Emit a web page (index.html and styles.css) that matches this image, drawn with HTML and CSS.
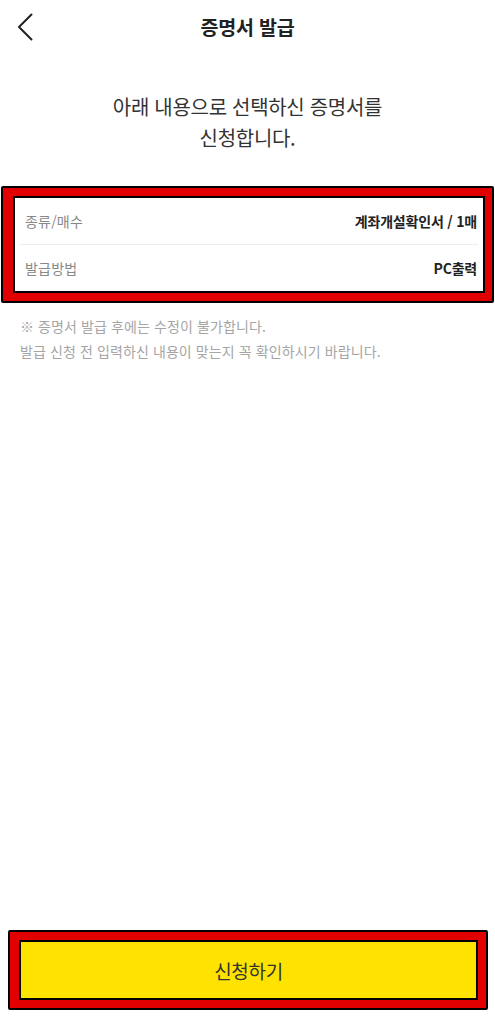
FILE: index.html
```html
<!DOCTYPE html>
<html lang="ko">
<head>
<meta charset="utf-8">
<title>증명서 발급</title>
<link rel="stylesheet" href="styles.css">
</head>
<body>
<div class="page">
  <header class="header">
    <button class="back" aria-label="뒤로">
      <svg width="16" height="28" viewBox="0 0 16 28"><path d="M14.5 1.5 L2 14 L14.5 26.5" fill="none" stroke="#222" stroke-width="2" stroke-linecap="round" stroke-linejoin="round"/></svg>
    </button>
    <h1 class="title">증명서 발급</h1>
  </header>

  <p class="lead">아래 내용으로 선택하신 증명서를<br>신청합니다.</p>

  <div class="mark mark-info">
    <div class="mark-inner info">
      <div class="row">
        <span class="label">종류/매수</span>
        <span class="value">계좌개설확인서 / 1매</span>
      </div>
      <div class="row">
        <span class="label">발급방법</span>
        <span class="value">PC출력</span>
      </div>
    </div>
  </div>

  <div class="notes">
    <p>※ 증명서 발급 후에는 수정이 불가합니다.</p>
    <p>발급 신청 전 입력하신 내용이 맞는지 꼭 확인하시기 바랍니다.</p>
  </div>

  <div class="mark mark-btn">
    <button class="mark-inner submit">신청하기</button>
  </div>
</div>
</body>
</html>
```

FILE: styles.css
```css
* { box-sizing: border-box; }
html, body { margin: 0; padding: 0; background: #fff; }
body {
  font-family: "Noto Sans CJK KR", "Noto Sans", sans-serif;
  color: #222;
}
.page {
  min-height: 1024px;
  display: flex;
  flex-direction: column;
}
.header {
  height: 54px;
  display: flex;
  align-items: center;
  justify-content: center;
  position: relative;
}
.back {
  position: absolute;
  left: 17px;
  top: 12px;
  padding: 0;
  border: 0;
  background: none;
  width: 18px;
  height: 30px;
  display: flex;
  align-items: center;
}
.title {
  margin: 0 0 2px;
  font-size: 19.5px;
  font-weight: 700;
  color: #222;
  letter-spacing: -0.2px;
}
.lead {
  margin: 37px 0 0;
  text-align: center;
  font-size: 20px;
  line-height: 31px;
  color: #333;
  letter-spacing: -0.3px;
}
.mark {
  border: 2px solid #000;
  background: #e10000;
  border-radius: 2px;
}
.mark-inner {
  border: 2px solid #000;
}
.mark-info {
  margin: 33px 1px 0 1px;
  padding: 8px 7px 8px 10px;
}
.info {
  background: #fff;
  padding: 0 5px 0 4px;
}
.row {
  height: 46px;
  display: flex;
  align-items: center;
  justify-content: space-between;
  padding: 0 1px 0 6px;
  font-size: 14px;
}
.row + .row { border-top: 1px solid #eeeeee; height: 47px; }
.label { color: #888; letter-spacing: 0.2px; }
.value { color: #222; font-weight: 700; letter-spacing: -0.2px; }
.notes {
  margin: 11px 0 0;
  padding: 0 20px;
  font-size: 14px;
  line-height: 25px;
  color: #a5a5a5;
  letter-spacing: 0.1px;
}
.notes p { margin: 0; }
.mark-btn {
  margin: auto 7px 14px 8px;
  padding: 8px 8px 8px 9px;
}
.submit {
  display: block;
  width: 100%;
  height: 60px;
  background: #fee300;
  font-family: inherit;
  font-size: 19px;
  color: #333;
  letter-spacing: -0.3px;
  padding: 0;
  cursor: pointer;
}
```
